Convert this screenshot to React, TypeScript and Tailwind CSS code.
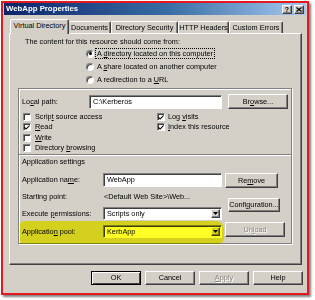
import React from "react";

const raised =
  "bg-[#d4d0c8] border border-t-white border-l-white border-r-[#404040] border-b-[#404040] shadow-[inset_-1px_-1px_0_#808080]";
const sunken =
  "bg-white border border-t-[#808080] border-l-[#808080] border-r-white border-b-white shadow-[inset_1px_1px_0_#404040]";
const disabledText = "text-[#8a8a8a] [text-shadow:1px_1px_0_#ffffff]";

function U({ children }: { children: React.ReactNode }) {
  return <span className="underline underline-offset-[1px] decoration-[0.8px]">{children}</span>;
}

function Check({ checked }: { checked?: boolean }) {
  return (
    <div className={`w-[8px] h-[8px] shrink-0 ${sunken} flex items-center justify-center`}>
      {checked && (
        <svg width="6" height="6" viewBox="0 0 7 7">
          <path d="M0.5 3 L2.5 5 L6.5 1 L6.5 2.6 L2.5 6.6 L0.5 4.6 Z" fill="#000" />
        </svg>
      )}
    </div>
  );
}

function Radio({ checked }: { checked?: boolean }) {
  return (
    <div className="w-[8px] h-[8px] shrink-0 rounded-full bg-white border border-t-[#808080] border-l-[#808080] border-r-white border-b-white shadow-[inset_1px_1px_0_#404040,0_0_0_0.5px_#c8c4bc] flex items-center justify-center">
      {checked && <div className="w-[3px] h-[3px] rounded-full bg-black" />}
    </div>
  );
}

function Arrow() {
  return (
    <div className={`w-[9px] h-full shrink-0 ${raised} flex items-center justify-center`}>
      <svg width="5" height="3" viewBox="0 0 5 3">
        <path d="M0 0 H5 L2.5 3 Z" fill="#000" />
      </svg>
    </div>
  );
}

export default function App() {
  return (
    <div className="w-[315px] h-[300px] bg-white pt-[1px] pl-[1px] font-['Liberation_Sans',Arial,sans-serif] text-[7.3px] leading-[10px] text-black">
      <div className="w-[308px] h-[294px] border-2 border-[#e3191f] bg-[#d4d0c8] shadow-[2px_2px_2px_rgba(0,0,0,0.5)] flex flex-col">
        {/* Title bar */}
        <div className="mx-[1px] h-[12px] bg-[linear-gradient(90deg,#0a246a,#3a6ea5_55%,#a6caf0)] flex items-center justify-between">
          <span className="pl-[2px] text-white font-bold text-[7.8px]">WebApp Properties</span>
          <div className="flex gap-[2px] pr-[2px]">
            <div className={`w-[10px] h-[9px] ${raised} flex items-center justify-center text-[7px] font-bold leading-none`}>?</div>
            <div className={`w-[10px] h-[9px] ${raised} flex items-center justify-center`}>
              <svg width="6" height="5" viewBox="0 0 6 5">
                <path d="M0.5 0.5 L5.5 4.5 M5.5 0.5 L0.5 4.5" stroke="#000" strokeWidth="1.2" />
              </svg>
            </div>
          </div>
        </div>

        {/* Tabs */}
        <div className="mt-[4px] ml-[7px] h-[14px] flex items-end">
          <div className="w-[59px] h-[15px] mb-[-1px] relative z-10 bg-[#d4d0c8] border-t border-l border-t-white border-l-white border-r border-r-[#404040] shadow-[inset_-1px_0_0_#808080] rounded-t-[2px] flex items-center justify-center pb-[2px]">
            Virtual Directory
          </div>
          <div className="w-[42px] h-[12px] border-t border-t-white border-r border-r-[#404040] shadow-[inset_-1px_0_0_#808080] rounded-t-[2px] flex items-center justify-center">
            Documents
          </div>
          <div className="w-[67px] h-[12px] border-t border-t-white border-l border-l-white border-r border-r-[#404040] shadow-[inset_-1px_0_0_#808080] rounded-t-[2px] flex items-center justify-center">
            Directory Security
          </div>
          <div className="w-[51px] h-[12px] border-t border-t-white border-l border-l-white border-r border-r-[#404040] shadow-[inset_-1px_0_0_#808080] rounded-t-[2px] flex items-center justify-center">
            HTTP Headers
          </div>
          <div className="w-[54px] h-[12px] border-t border-t-white border-l border-l-white border-r border-r-[#404040] shadow-[inset_-1px_0_0_#808080] rounded-t-[2px] flex items-center justify-center">
            Custom Errors
          </div>
        </div>

        {/* Panel */}
        <div className={`ml-[6px] w-[293px] h-[232px] ${raised} flex flex-col`}>
          <div className="mt-[3px] pl-[15px]">The content for this resource should come from:</div>
          <div className="pl-[76px] flex flex-col">
            <div className="h-[13px] flex items-center gap-[1px]">
              <Radio checked />
              <span className="border border-dotted border-black px-[1px] leading-[9px]">
                A <U>d</U>irectory located on this computer
              </span>
            </div>
            <div className="h-[13px] flex items-center gap-[2px]">
              <Radio />
              <span className="px-[1px]">
                A <U>s</U>hare located on another computer
              </span>
            </div>
            <div className="h-[13px] flex items-center gap-[2px]">
              <Radio />
              <span className="px-[1px]">
                A redirection to a <U>U</U>RL
              </span>
            </div>
          </div>

          {/* Group box */}
          <div className="mt-[2px] ml-[8px] w-[274px] h-[156px] relative border border-[#808080] shadow-[inset_1px_1px_0_#ffffff,1px_1px_0_#ffffff] flex flex-col">
            {/* Local path */}
            <div className="mt-[5px] h-[15px] flex items-center pl-[3px]">
              <span className="w-[67px]">
                Lo<U>c</U>al path:
              </span>
              <div className={`w-[133px] h-[14px] ${sunken} flex items-center pl-[3px]`}>C:\Kerberos</div>
              <div className={`ml-[6px] w-[60px] h-[15px] ${raised} flex items-center justify-center`}>
                Br<U>o</U>wse...
              </div>
            </div>

            {/* Checkboxes */}
            <div className="mt-[2px] flex">
              <div className="pl-[4px] w-[138px] flex flex-col">
                <div className="h-[11px] flex items-center gap-[4px]">
                  <Check />
                  <span>
                    Scrip<U>t</U> source access
                  </span>
                </div>
                <div className="h-[10px] flex items-center gap-[4px]">
                  <Check checked />
                  <span>
                    <U>R</U>ead
                  </span>
                </div>
                <div className="h-[11px] flex items-center gap-[4px]">
                  <Check />
                  <span>
                    <U>W</U>rite
                  </span>
                </div>
                <div className="h-[10px] flex items-center gap-[4px]">
                  <Check />
                  <span>
                    Directory <U>b</U>rowsing
                  </span>
                </div>
              </div>
              <div className="flex flex-col">
                <div className="h-[11px] flex items-center gap-[3px]">
                  <Check checked />
                  <span>
                    Log <U>v</U>isits
                  </span>
                </div>
                <div className="h-[10px] flex items-center gap-[3px]">
                  <Check checked />
                  <span>
                    <U>I</U>ndex this resource
                  </span>
                </div>
              </div>
            </div>

            {/* Separator */}
            <div className="mt-[1px] h-[2px] border-t border-t-[#808080] border-b border-b-white" />
            <div className="mt-[1px] pl-[3px] h-[10px]">Application settings</div>

            {/* App settings */}
            <div className="mt-[6px] flex">
              <div className="pl-[3px] w-[206px] flex flex-col">
                <div className="h-[14px] flex items-center">
                  <span className="w-[81px]">
                    Application na<U>m</U>e:
                  </span>
                  <div className={`w-[119px] h-[14px] ${sunken} flex items-center pl-[3px]`}>WebApp</div>
                </div>
                <div className="mt-[4px] h-[12px] flex items-center">
                  <span className="w-[82px]">Starting point:</span>
                  <span>&lt;Default Web Site&gt;\Web...</span>
                </div>
                <div className="mt-[4px] h-[13px] flex items-center">
                  <span className="w-[81px]">
                    Execute <U>p</U>ermissions:
                  </span>
                  <div className={`w-[119px] h-[13px] ${sunken} flex items-center justify-between pl-[3px] pr-[1px] py-[1px]`}>
                    <span>Scripts only</span>
                    <Arrow />
                  </div>
                </div>
                <div className="mt-[5px] h-[13px] flex items-center">
                  <span className="w-[81px]">
                    Applicatio<U>n</U> pool:
                  </span>
                  <div className={`w-[119px] h-[13px] ${sunken} flex items-center justify-between pl-[3px] pr-[1px] py-[1px]`}>
                    <span>KerbApp</span>
                    <Arrow />
                  </div>
                </div>
              </div>
              <div className="flex flex-col">
                <div className={`w-[53px] h-[15px] ${raised} flex items-center justify-center`}>
                  Re<U>m</U>ove
                </div>
                <div className={`mt-[10px] ml-[3px] w-[52px] h-[14px] ${raised} flex items-center justify-center`}>
                  Confi<U>g</U>uration...
                </div>
                <div className={`mt-[10px] w-[60px] h-[15px] ${raised} flex items-center justify-center ${disabledText}`}>
                  Un<U>l</U>oad
                </div>
              </div>
            </div>

            {/* Highlighter mark */}
            <div className="absolute left-[1px] top-[132px] w-[204px] h-[23px] rounded-[4px_8px_6px_3px] bg-[#ffff00] opacity-85 mix-blend-multiply pointer-events-none" />
          </div>
        </div>

        {/* Bottom buttons */}
        <div className="mt-[6px] h-[14px] flex justify-end gap-[4px] pr-[4px]">
          <div className="w-[50px] h-[14px] bg-[#d4d0c8] border border-black shadow-[inset_1px_1px_0_#ffffff,inset_-1px_-1px_0_#404040] flex items-center justify-center">
            OK
          </div>
          <div className={`w-[50px] h-[14px] ${raised} flex items-center justify-center`}>Cancel</div>
          <div className={`w-[50px] h-[14px] ${raised} flex items-center justify-center ${disabledText}`}>
            <U>A</U>pply
          </div>
          <div className={`w-[50px] h-[14px] ${raised} flex items-center justify-center`}>Help</div>
        </div>
      </div>
    </div>
  );
}
